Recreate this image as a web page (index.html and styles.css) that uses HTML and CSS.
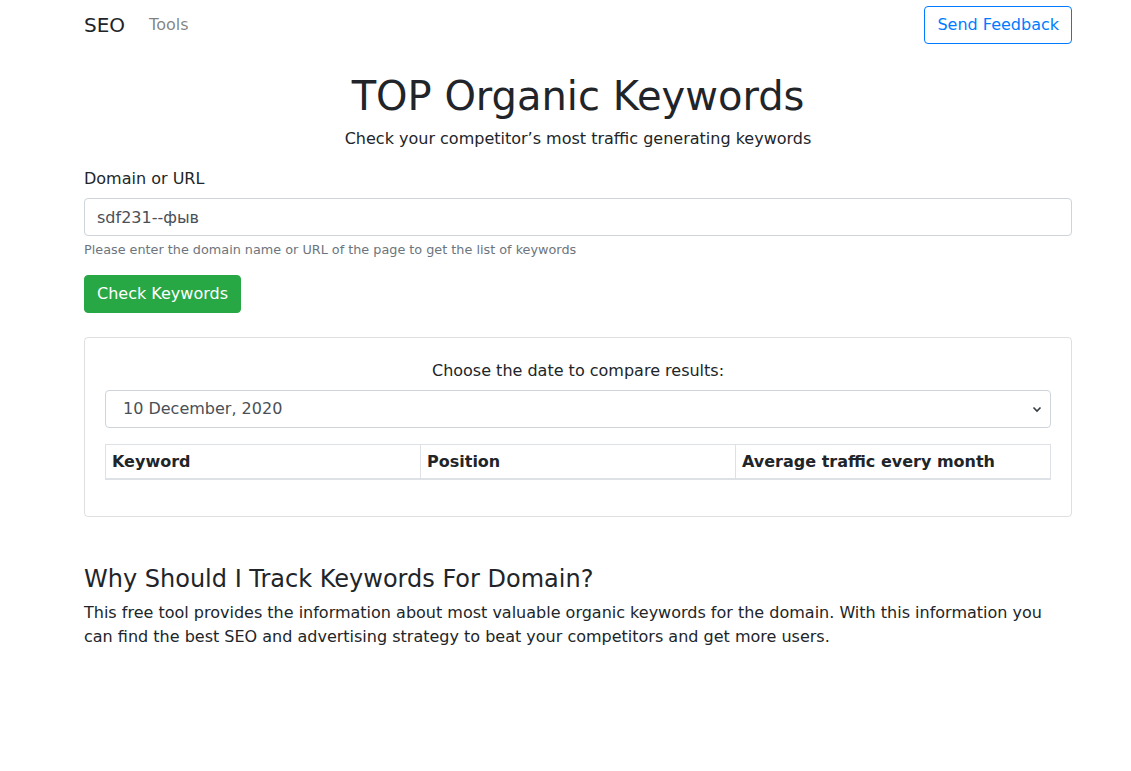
FILE: index.html
```html
<!DOCTYPE html>
<html lang="en">
<head>
<meta charset="utf-8">
<title>TOP Organic Keywords</title>
<link rel="stylesheet" href="styles.css">
</head>
<body>
<div class="page">
  <nav class="navbar">
    <div class="nav-left">
      <a class="brand" href="#">SEO</a>
      <a class="nav-link" href="#">Tools</a>
    </div>
    <button class="btn btn-outline">Send Feedback</button>
  </nav>

  <header class="hero">
    <h1 class="title">TOP Organic Keywords</h1>
    <p class="lead">Check your competitor’s most traffic generating keywords</p>
  </header>

  <form class="form">
    <label class="label" for="domain">Domain or URL</label>
    <input class="input" id="domain" type="text" value="sdf231--фыв">
    <small class="help">Please enter the domain name or URL of the page to get the list of keywords</small>
    <button class="btn btn-success" type="button">Check Keywords</button>
  </form>

  <section class="card">
    <p class="card-label">Choose the date to compare results:</p>
    <div class="select">
      <span>10 December, 2020</span>
      <svg class="chev" width="10" height="8" viewBox="0 0 10 8"><path d="M1.5 2.5 L5 6 L8.5 2.5" fill="none" stroke="#343a40" stroke-width="1.6"/></svg>
    </div>
    <div class="table">
      <div class="th">Keyword</div>
      <div class="th">Position</div>
      <div class="th">Average traffic every month</div>
    </div>
  </section>

  <section class="about">
    <h2 class="about-title">Why Should I Track Keywords For Domain?</h2>
    <p class="about-text">This free tool provides the information about most valuable organic keywords for the domain. With this information you can find the best SEO and advertising strategy to beat your competitors and get more users.</p>
  </section>
</div>
</body>
</html>
```

FILE: styles.css
```css
* { box-sizing: border-box; }
html, body { margin: 0; padding: 0; background: #fff; }
body {
  font-family: "DejaVu Sans", Verdana, sans-serif;
  color: #212529;
  font-size: 16px;
  line-height: 1.5;
}
.page {
  width: 988px;
  margin-left: 84px;
}
.navbar {
  display: flex;
  align-items: center;
  justify-content: space-between;
  height: 50px;
}
.nav-left { display: flex; align-items: center; gap: 24px; }
.brand { font-size: 20px; color: #212529; text-decoration: none; }
.nav-link { font-size: 16px; color: rgba(0,0,0,.5); text-decoration: none; }
.btn {
  font-family: inherit;
  font-size: 16px;
  line-height: 24px;
  padding: 6px 12px;
  border-radius: 4px;
  border: 1px solid transparent;
  background: none;
  cursor: pointer;
}
.btn-outline { color: #007bff; border-color: #007bff; height: 38px; }
.btn-success { color: #fff; background: #28a745; border-color: #28a745; height: 38px; }
.hero { text-align: center; margin-top: 22px; }
.title { font-size: 40px; font-weight: 400; line-height: 1.2; margin: 0; }
.lead { margin: 7px 0 0; }
.form { display: flex; flex-direction: column; align-items: flex-start; margin-top: 16px; }
.label { margin-bottom: 7px; }
.input {
  width: 100%;
  height: 38px;
  font-family: inherit;
  font-size: 16px;
  color: #495057;
  padding: 6px 12px;
  border: 1px solid #ced4da;
  border-radius: 4px;
}
.help { font-size: 12.8px; color: #6c757d; margin-top: 4px; margin-bottom: 16px; }
.card {
  margin-top: 24px;
  border: 1px solid rgba(0,0,0,.125);
  border-radius: 4px;
  padding: 20px;
}
.card-label { text-align: center; margin: 1px 0 7px; }
.select {
  height: 38px;
  border: 1px solid #ced4da;
  border-radius: 4px;
  display: flex;
  align-items: center;
  justify-content: space-between;
  padding: 0 8px 0 17px;
  color: #495057;
}
.table {
  display: grid;
  grid-template-columns: 315px 315px 1fr;
  margin-top: 16px;
  margin-bottom: 16px;
  border-bottom: 2px solid #dee2e6;
  border-right: 1px solid #dee2e6;
}
.th {
  font-weight: 700;
  padding: 5px 6px 4px;
  border-top: 1px solid #dee2e6;
  border-left: 1px solid #dee2e6;
}
.about { margin-top: 48px; }
.about-title { font-size: 24px; font-weight: 400; line-height: 1.2; margin: 0 0 7px; }
.about-text { margin: 0; }
```
